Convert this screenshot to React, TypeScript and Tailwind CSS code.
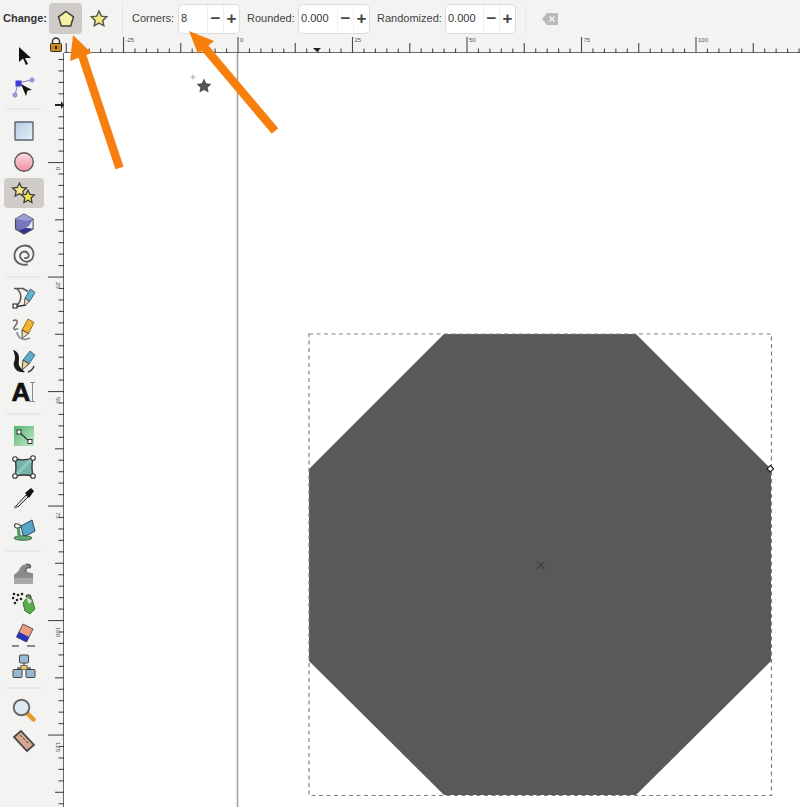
import type { ReactNode } from "react";

const FONT = { fontFamily: '"Liberation Sans", Arial, sans-serif' };

// ruler ticks: 25 units = 114.5px, ten steps per label
const STEP = 11.45;

function HRuler() {
  const ticks = Array.from({ length: 66 }, (_, i) => i);
  const labels = ["-25", "0", "25", "50", "75", "100"];
  return (
    <svg className="block h-[17px] flex-1" viewBox="64 36 736 17">
      {ticks.map((i) => {
        const x = 123.5 - STEP * 5 + i * STEP;
        const top = i % 10 === 5 ? 37 : i % 5 === 0 ? 43 : 48.5;
        return <line key={i} x1={x} x2={x} y1={top} y2={53} stroke="#4a4a4a" strokeWidth="1.100" />;
      })}
      {labels.map((l, i) => (
        <text key={l} x={125.5 + i * 114.5} y={42} fontSize="6" fill="#555" style={FONT}>{l}</text>
      ))}
      <line x1="64" x2="800" y1="52.6" y2="52.6" stroke="#333" strokeWidth="0.8" />
      <path d="M313 48h8l-4 4z" fill="#222" />
    </svg>
  );
}

function VRuler() {
  const ticks = Array.from({ length: 68 }, (_, i) => i);
  const labels = ["0", "25", "50", "75", "100", "125"];
  return (
    <svg className="block h-full w-[17px]" viewBox="47 53 17 754">
      {ticks.map((i) => {
        const y = 59.5 + i * STEP;
        const n = i + 1;
        const left = (n - 10) % 10 === 0 ? 48 : (n - 10) % 5 === 0 ? 55 : 58.5;
        return <line key={i} y1={y} y2={y} x1={left} x2={64} stroke="#4a4a4a" strokeWidth="1.100" />;
      })}
      {labels.map((l, i) => (
        <text key={l} fontSize="6" fill="#555" style={FONT} transform={`translate(56 ${167 + i * 115}) rotate(90)`}>{l}</text>
      ))}
      <line x1="63.6" x2="63.6" y1="53" y2="807" stroke="#333" strokeWidth="0.8" />
      <path d="M55 104h6v-3l3 4-3 4v-3h-6z" fill="#222" />
    </svg>
  );
}

function Field({ value, width }: { value: string; width: string }) {
  return (
    <div className={`flex h-[30px] items-center rounded-[5px] border border-[#dcdcdc] bg-white pl-[2px] ${width}`}>
      <span className="flex-1 text-[11px] text-[#333]">{value}</span>
      <span className="flex h-full w-[16px] items-center justify-center border-l border-[#f1f1f1] text-[17px] font-bold text-[#444]">−</span>
      <span className="flex h-full w-[16px] items-center justify-center border-l border-[#f1f1f1] text-[17px] font-bold text-[#444]">+</span>
    </div>
  );
}

function Icon({ children, size = 24 }: { children: ReactNode; size?: number }) {
  return <svg width={size} height={size} viewBox="0 0 24 24">{children}</svg>;
}

function Tool({ children, active = false }: { children: ReactNode; active?: boolean }) {
  return (
    <div className="flex h-[31px] items-center justify-center">
      <div className={`flex h-[30px] w-[40px] items-center justify-center rounded-[4px] ${active ? "bg-[#d0ccc9]" : ""}`}>
        {children}
      </div>
    </div>
  );
}

function Sep() {
  return (
    <div className="flex h-[13px] items-center px-[4px]">
      <div className="h-[2px] w-full bg-[#e8e8e7]" />
    </div>
  );
}

const star = "M12 2.5l2.8 6 6.5.8-4.8 4.4 1.3 6.4L12 16.9l-5.8 3.2 1.3-6.4-4.8-4.4 6.5-.8z";

function Tools() {
  return (
    <div className="flex w-[47px] shrink-0 flex-col px-[2px] pt-[4.5px]">
      <Tool><Icon><path d="M7 3l0 15 4-3.5 3 6.5 2-1-3-6h6z" fill="#111" /></Icon></Tool>
      <Tool>
        <Icon>
          <path d="M6 8L3 20M6 8l13-3" stroke="#8a86b8" strokeWidth="1" fill="none" />
          <rect x="3.5" y="5.5" width="6" height="6" fill="#3d3de0" />
          <circle cx="20" cy="5" r="2.2" fill="#a49fe0" stroke="#6d68b0" strokeWidth=".5" />
          <circle cx="3" cy="20" r="2.2" fill="#a49fe0" stroke="#6d68b0" strokeWidth=".5" />
          <path d="M9 9l11 6-4.500 .5L14 21z" fill="#111" />
        </Icon>
      </Tool>
      <Sep />
      <Tool>
        <Icon>
          <defs>
            <linearGradient id="sq" x1="0" y1="0" x2="1" y2="1"><stop offset="0" stopColor="#b4cce4" /><stop offset="1" stopColor="#e8eff6" /></linearGradient>
          </defs>
          <rect x="3" y="3" width="18" height="18" fill="url(#sq)" stroke="#5a6670" strokeWidth="1.4" rx=".5" />
        </Icon>
      </Tool>
      <Tool>
        <Icon>
          <defs>
            <linearGradient id="ci" x1="0" y1="0" x2="0" y2="1"><stop offset="0" stopColor="#fbdde3" /><stop offset="1" stopColor="#f28ea3" /></linearGradient>
          </defs>
          <circle cx="12" cy="12" r="9.3" fill="url(#ci)" stroke="#5f5a5c" strokeWidth="1.4" />
        </Icon>
      </Tool>
      <Tool active>
        <Icon size={27}>
          <path d={star} fill="#f3e98e" stroke="#3f3f36" strokeWidth="1.800" transform="translate(.5 1) scale(.66)" />
          <path d={star} fill="#f0e04e" stroke="#3f3f36" strokeWidth="1.800" transform="translate(8.500 7.500) scale(.62)" />
        </Icon>
      </Tool>
      <Tool>
        <Icon>
          <path d="M12 2l9 5v10l-9 5-8.500-5V7z" fill="#7478b8" stroke="#4b4b5c" strokeWidth="1.200" />
          <path d="M12 2l9 5-6 2-5-1-6.500-1z" fill="#9ca0d0" />
          <path d="M20.500 8v8.500l-7-.5c3-1 5-4 7-8z" fill="#eeeef6" />
          <path d="M20.500 17L12 21.500 7 18.500l7-2.500z" fill="#34308c" />
        </Icon>
      </Tool>
      <Tool>
        <Icon>
          <path d="M15 21.500C7 23 2 18 2.500 12 3 6 8 2.500 13 2.500c6 0 9 5 8.500 9.500-.5 5-5 7.500-8.500 6.500S7 14 8.500 11 14 7.500 16 10.500s-.5 5-3 4.500" fill="none" stroke="#606060" strokeWidth="1.800" strokeLinecap="round" />
        </Icon>
      </Tool>
      <Sep />
      <Tool>
        <Icon>
          <path d="M2 1.500h9l5 3M5 2c5 4 5 11 .5 16" fill="none" stroke="#555" strokeWidth="1.600" />
          <rect x="1" y="17" width="4" height="4" fill="#fff" stroke="#222" strokeWidth="1.100" />
          <path d="M5 19.500l9-1.500" stroke="#333" strokeWidth="1.400" />
          <path d="M13 11l5.500-9 4.500 3.500-5.500 9z" fill="#62b3d8" stroke="#2b4c5c" strokeWidth=".8" />
          <path d="M12 19l1-8 4.500 3.500z" fill="#e9d8b4" stroke="#333" strokeWidth=".8" />
        </Icon>
      </Tool>
      <Tool>
        <Icon>
          <path d="M1 3c2-2 5-1 4 2S1 9 2 11s3-1 4 0" fill="none" stroke="#666" strokeWidth="1.400" />
          <path d="M10 12l6-11 6 3.500-5.500 11z" fill="#f2b32f" stroke="#7a5b14" strokeWidth=".8" />
          <path d="M10 20.500V12l6.500 3.500z" fill="#ecd9b2" stroke="#333" strokeWidth=".8" />
          <path d="M5 14c1 7 7 9 13 6" fill="none" stroke="#8a8a8a" strokeWidth="1.700" />
        </Icon>
      </Tool>
      <Tool>
        <Icon>
          <path d="M1 1c4 1 6 4 6 8s-1 6 1 9c1 2 3 3 5 5-6 1-10-2-11-6-1-3 1-5 1-8S2 3 1 1z" fill="#1a1a1a" />
          <path d="M11 11l7-9 5 4-6 9z" fill="#60a9cc" stroke="#274757" strokeWidth=".7" />
          <path d="M10 21l1-10 6 4z" fill="#f0d58c" stroke="#333" strokeWidth=".9" />
          <path d="M16 23c3-1 5-3 6-6" stroke="#333" strokeWidth="1.500" fill="none" />
        </Icon>
      </Tool>
      <Tool>
        <div className="flex items-center">
          <span className="text-[26px] leading-[26px] font-bold text-[#111] [-webkit-text-stroke:0.7px_#111]">A</span>
          <svg width="5" height="20" viewBox="0 0 5 20">
            <path d="M0 .5h5M2.500 .5v19M0 19.500h5" stroke="#8a8a8a" strokeWidth="1" fill="none" />
          </svg>
        </div>
      </Tool>
      <Sep />
      <Tool>
        <Icon>
          <defs>
            <linearGradient id="gr" x1="0" y1="0" x2="1" y2="1"><stop offset="0" stopColor="#4fb86a" /><stop offset="1" stopColor="#c5e6cd" /></linearGradient>
          </defs>
          <rect x="2" y="2" width="20" height="20" fill="url(#gr)" />
          <path d="M7 8l11 10" stroke="#333" strokeWidth="1.200" />
          <rect x="5" y="6" width="4" height="4" fill="#fff" stroke="#333" />
          <rect x="16" y="15.500" width="4" height="4" fill="#fff" stroke="#333" />
        </Icon>
      </Tool>
      <Tool>
        <Icon>
          <path d="M3 4q9 2 18-1-2 9 0 18-9-2-18 0 2-9 0-17z" fill="#76b4a8" stroke="#333" strokeWidth="1.300" />
          <path d="M3 21L21 3" stroke="#8fc7bf" strokeWidth="3" />
          {[[3, 4], [21, 3], [21, 21], [3, 21]].map(([x, y]) => (
            <circle key={`${x}-${y}`} cx={x} cy={y} r="2.300" fill="#fff" stroke="#333" strokeWidth="1.100" />
          ))}
        </Icon>
      </Tool>
      <Tool>
        <Icon>
          <path d="M4 20l10-11 2 2L6 21z" fill="#d8d8d8" stroke="#333" strokeWidth="1" />
          <path d="M13 7l6-5 3 3-5 7z" fill="#111" />
          <circle cx="3.500" cy="21" r="1.500" fill="#888" />
        </Icon>
      </Tool>
      <Tool>
        <Icon>
          <ellipse cx="11" cy="21" rx="9" ry="2.300" fill="#67a878" stroke="#2d5a3a" strokeWidth=".8" />
          <path d="M9 9l11-6 3 11-9 5-3-1z" fill="#5aa6c9" stroke="#2f4854" strokeWidth="1" />
          <path d="M9 9c-4-4-8-2-6 1 1 2 4 1 6 0" fill="none" stroke="#444" strokeWidth="1.200" />
          <path d="M5 10c0 4 0 7 1 10h3c0-2-1-6-1-9z" fill="#4e9c68" />
        </Icon>
      </Tool>
      <Sep />
      <Tool>
        <Icon>
          <path d="M2 23V14c3-3 4-3 5-5s3-6 8-6c4 0 5 2 4 4-2-1-5 0-5 2s4 3 7 3v11z" fill="#8a8a8a" />
          <path d="M2 17h19v6H2z" fill="#a8a8a8" />
          <path d="M14 3c4 0 5 2 4 4-2-1-5 0-4 4" fill="none" stroke="#555" strokeWidth="1.200" />
        </Icon>
      </Tool>
      <Tool>
        <Icon>
          <path d="M11 11l5-7 4 3 3 10-5 5-5-3z" fill="#58ad4a" stroke="#315e2a" strokeWidth=".8" />
          <path d="M14 5c0-3 5-3 5 1" fill="none" stroke="#333" strokeWidth="1.200" />
          <path d="M14 5l6 4-3 3z" fill="#ddd" />
          {[[2, 2], [6, 3], [10, 2], [1, 6], [5, 8], [3, 11], [9, 7]].map(([x, y]) => (
            <circle key={`${x}-${y}`} cx={x} cy={y} r="1.300" fill="#222" />
          ))}
        </Icon>
      </Tool>
      <Tool>
        <Icon>
          <path d="M11 1l10 5-6.500 13-10-5z" fill="#ec9c7e" stroke="#555" strokeWidth="1" />
          <path d="M7 9l10 5-2.500 5-10-5z" fill="#2834b8" />
          <path d="M0 23h7M15 23h8" stroke="#666" strokeWidth="1.300" />
        </Icon>
      </Tool>
      <Tool>
        <Icon>
          <path d="M12 9v7M6 17v-3h12v3" fill="none" stroke="#555" strokeWidth="1.300" />
          <rect x="7.500" y="1" width="9" height="8" rx="1" fill="#9ab8d2" stroke="#444" strokeWidth="1" />
          <rect x="1" y="15.500" width="9" height="8" rx="1" fill="#9ab8d2" stroke="#444" strokeWidth="1" />
          <rect x="14" y="15.500" width="9" height="8" rx="1" fill="#9ab8d2" stroke="#444" strokeWidth="1" />
          <rect x="9" y="11.500" width="6" height="4" fill="#f1cc5e" stroke="#555" strokeWidth=".8" />
        </Icon>
      </Tool>
      <Sep />
      <Tool>
        <Icon>
          <path d="M15 15l6.500 6.500" stroke="#e39a26" strokeWidth="4.500" strokeLinecap="round" />
          <circle cx="9.500" cy="9.500" r="7.800" fill="#dfe9f2" stroke="#666" strokeWidth="1.900" />
        </Icon>
      </Tool>
      <Tool>
        <Icon>
          <path d="M2 8l7-6 13 14-7 6z" fill="#d9a78d" stroke="#444" strokeWidth="1.700" />
          <path d="M8 6l2 2M11 9l2 2M14 12l2 2" stroke="#444" strokeWidth="1" />
        </Icon>
      </Tool>
    </div>
  );
}

function Canvas() {
  return (
    <svg className="block h-full flex-1" viewBox="64 53 736 754">
      <line x1="237.500" x2="237.500" y1="53" y2="807" stroke="#a3a3a3" strokeWidth="1.600" />
      <path d="M204 78.500l2.300 4.700 5.200.7-3.800 3.600.9 5.100-4.600-2.500-4.600 2.500.9-5.100-3.800-3.600 5.200-.7z" fill="#555" />
      <path d="M190.500 77h5M193 74.500v5" stroke="#aaa" strokeWidth="1" />
      <path d="M444 334H636L771 469V661L636 795H444L309 661V469Z" fill="#595959" />
      <rect x="309" y="334" width="462.500" height="461.500" fill="none" stroke="#7f7d96" strokeWidth="1.200" strokeDasharray="4 3.500" />
      <path d="M537 561.500l7.500 7.500M544.500 561.500l-7.500 7.500" stroke="#2f2f2f" strokeWidth="1" />
      <rect x="768" y="466.500" width="4.600" height="4.600" fill="#fff" stroke="#111" strokeWidth="1.100" transform="rotate(45 770.300 468.800)" />
    </svg>
  );
}

export default function App() {
  return (
    <div className="relative flex h-[807px] w-[800px] flex-col overflow-hidden bg-[#f3f3f2] text-[#444]" style={FONT}>
      {/* controls bar */}
      <div className="flex h-[36px] shrink-0 items-center pt-[1px] text-[11px]">
        <span className="ml-[3px] w-[46px] font-bold text-[#333]">Change:</span>
        <div className="flex h-[31px] w-[33px] items-center justify-center rounded-[4px] bg-[#cfcbc8]">
          <Icon size={20}><path d="M12 3l9 6.500-3.400 11H6.400L3 9.500z" fill="#f7f0a6" stroke="#3f3f36" strokeWidth="1.800" /></Icon>
        </div>
        <div className="ml-[6px] flex w-[22px] justify-center">
          <Icon size={20}><path d={star} fill="#f0e68a" stroke="#55554a" strokeWidth="1.700" /></Icon>
        </div>
        <div className="ml-[12px] h-[30px] w-px bg-[#e4e4e3]" />
        <span className="ml-[9px] w-[46px]">Corners:</span>
        <Field value="8" width="w-[62px]" />
        <span className="ml-[7px] w-[51px]">Rounded:</span>
        <Field value="0.000" width="w-[72px]" />
        <span className="ml-[7px] w-[68px]">Randomized:</span>
        <Field value="0.000" width="w-[71px]" />
        <div className="ml-[9px] h-[30px] w-px bg-[#e9e9e8]" />
        <svg className="ml-[16px]" width="17" height="14" viewBox="0 0 17 14">
          <path d="M5 1h11v12H5L0 7z" fill="#b9b9b8" />
          <path d="M7.500 4.500l5 5M12.500 4.500l-5 5" stroke="#f2f2f1" strokeWidth="1.500" />
        </svg>
      </div>

      <div className="flex min-h-0 flex-1">
        <Tools />
        <div className="flex min-w-0 flex-1 flex-col">
          <div className="flex h-[17px] shrink-0">
            <div className="flex w-[17px] items-center justify-center">
              <svg width="14" height="15" viewBox="0 0 14 15">
                <path d="M3.500 7V4.500a3.500 3.500 0 017 0V7" fill="none" stroke="#333" strokeWidth="1.500" />
                <rect x="1.500" y="6.500" width="11" height="8" rx="1" fill="#c98a1f" stroke="#333" />
                <rect x="6" y="9" width="2" height="3" fill="#222" />
              </svg>
            </div>
            <HRuler />
          </div>
          <div className="flex min-h-0 flex-1">
            <VRuler />
            <div className="flex min-w-0 flex-1 bg-white">
              <Canvas />
            </div>
          </div>
        </div>
      </div>

      {/* callout arrows laid over the screenshot */}
      <svg className="pointer-events-none absolute inset-0" width="800" height="807" viewBox="0 0 800 807">
        <path d="M119.500 168L81 52" stroke="#f77f0e" strokeWidth="8.500" fill="none" />
        <path d="M73 35L91.500 53 70 61z" fill="#f77f0e" />
        <path d="M275 131L205 48" stroke="#f77f0e" strokeWidth="8.500" fill="none" />
        <path d="M189 31L214 41 198 54z" fill="#f77f0e" />
      </svg>
    </div>
  );
}
